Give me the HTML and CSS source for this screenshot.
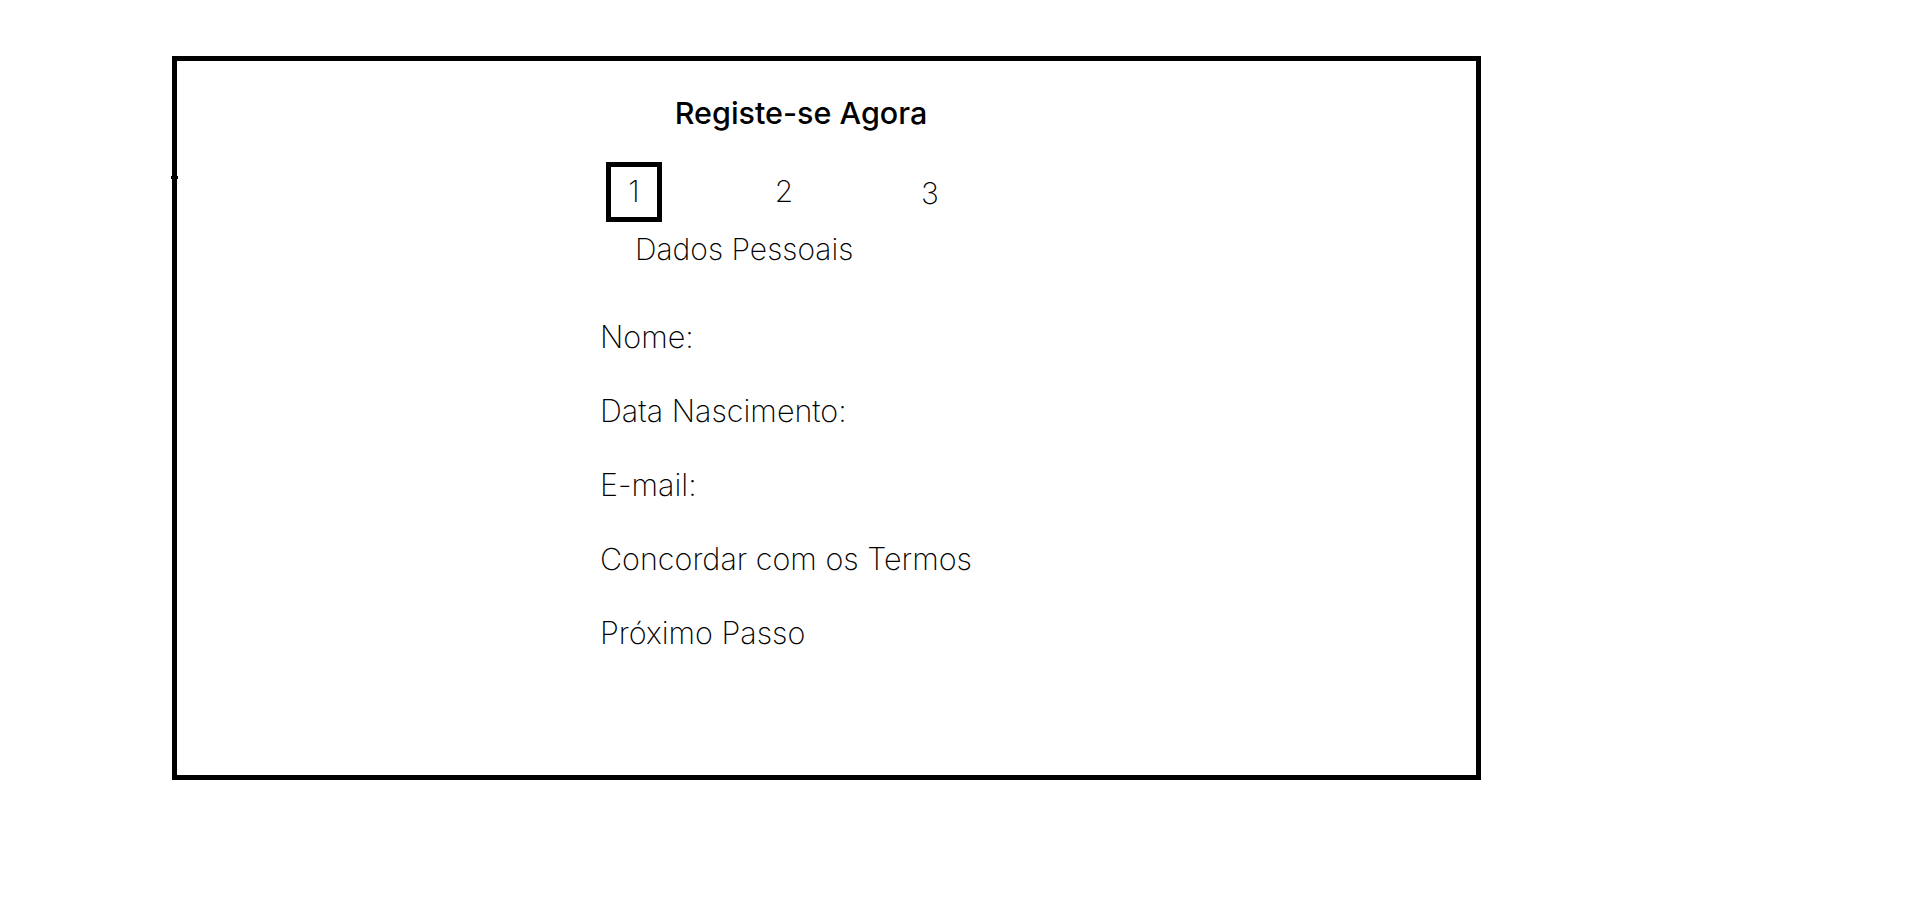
FILE: index.html
```html
<!DOCTYPE html>
<html lang="pt">
<head>
    <meta charset="UTF-8">
    <meta name="viewport" content="width=device-width, initial-scale=1.0">
    <title>Registe-se</title>
    <link rel="stylesheet" href="styles.css">
</head>
<body>
    <div class="card">
        <span class="tick"></span>
        <div class="form">
            <h1 class="title">Registe-se Agora</h1>

            <div class="steps">
                <div class="step active">1</div>
                <div class="step">2</div>
                <div class="step last">3</div>
            </div>
            <div class="step-name">Dados Pessoais</div>

            <div class="field">Nome:</div>
            <div class="field">Data Nascimento:</div>
            <div class="field">E-mail:</div>
            <div class="field">Concordar com os Termos</div>
            <div class="field">Próximo Passo</div>
        </div>
    </div>
</body>
</html>
```

FILE: styles.css
```css
body {
    margin: 0;
    font-family: Inter, "Liberation Sans", sans-serif;
    font-weight: 200;
    color: #000;
    background-color: #fff;
}

.card {
    position: relative;
    box-sizing: border-box;
    width: 1309px;
    height: 724px;
    margin: 56px 0 0 172px;
    border: 5px solid #000;
    padding: 0 0 0 423px;
}

/* little mark sitting on the left border */
.tick {
    position: absolute;
    left: -6px;
    top: 115px;
    width: 7px;
    height: 3px;
    background-color: #000;
}

.form {
    width: 402px;
}

.title {
    margin: 35px 0 0 0;
    font-size: 30.5px;
    line-height: 34px;
    font-weight: 500;
    text-align: center;
}

.steps {
    display: flex;
    align-items: flex-start;
    margin-top: 32px;
    padding-left: 6px;
}

.step {
    flex-shrink: 0;
    box-sizing: border-box;
    width: 56px;
    height: 60px;
    border: 5px solid transparent;
    font-size: 30px;
    line-height: 48px;
    text-align: center;
    margin-right: 94px;
}

.step.active {
    border-color: #000;
}

.step.last {
    margin: 2px 0 0 -4px;
}

.step-name {
    margin: 8px 0 0 35px;
    font-size: 30px;
    line-height: 34px;
}

.field {
    margin-top: 40px;
    font-size: 30.5px;
    line-height: 34px;
}

.step-name + .field {
    margin-top: 54px;
}
```
